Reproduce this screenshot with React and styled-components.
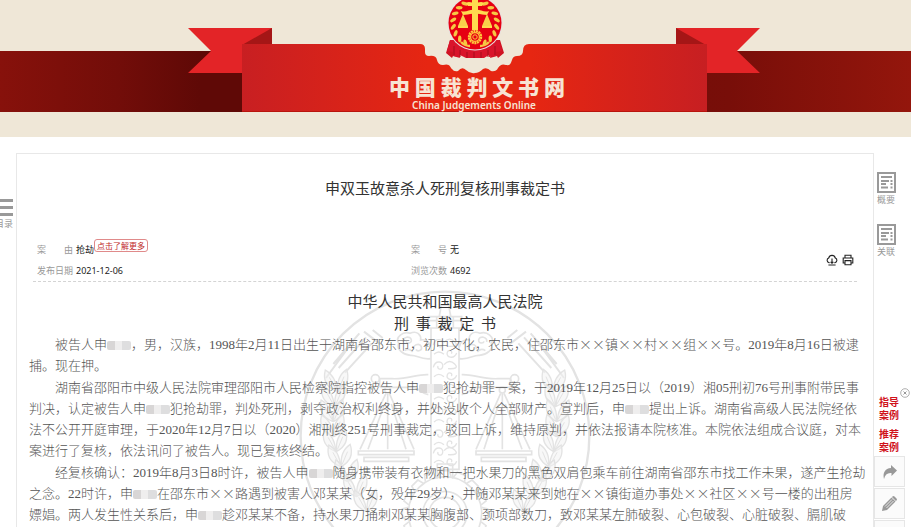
import styled, { createGlobalStyle } from 'styled-components';

const GlobalStyle = createGlobalStyle`
    * { box-sizing: border-box; }
    body {
        margin: 0;
        background: #fff;
        color: #333;
        font-family: "Noto Sans", "Noto Sans CJK SC", sans-serif;
    }
    button {
        padding: 0;
        border: 0;
        background: none;
        font: inherit;
        color: inherit;
        cursor: pointer;
    }
    svg { display: block; }
`

const Page = styled.div`
    height: 100vh;
    overflow: hidden;
`

/* ---------- header ---------- */

const Header = styled.header`
    display: flex;
    justify-content: center;
    height: 137px;
    padding-left: 37px;
    background:
        linear-gradient(90deg, #87110b 0, #720d09 120px, #5f0906 200px, #5f0906 260px, #780e09 80%, #94160c 100%) 0 51px / 100% 61px no-repeat,
        #efe7d7;
`
const Banner = styled.div`
    position: relative;
    width: 572px;
    flex: none;
`
const BannerText = styled.div`
    position: absolute;
    left: 0;
    right: 0;
    top: 73px;
    text-align: center;
    color: #f7e3d3;
    white-space: nowrap;
`
const SiteName = styled.h1`
    margin: 0;
    padding-left: 6px;
    font: 900 21px/26px "Noto Sans CJK SC", sans-serif;
`
const SiteNameEn = styled.p`
    margin: 0;
    font: 600 10px/12px "Noto Sans", sans-serif;
`

const WHEAT = [20, 38, 56, 74, 92, 110, 128, 146]

function Emblem() {
    return (
        <g>
            <path d="M262 40h11l4 14-6 1 1 3-7-2-1 2-6-5zM312 40h-11l-4 14 6 1-1 3 7-2 1 2 6-5z" fill="#cf1322" />
            <path d="M262 40l-3 11 6 1v4l7 1v-2l6 3h18l5-3v2l7-1v-4l6-1-3-11z" fill="#d9142b" />
            <path d="M266 46v9M272 50v7M279 52v6M286 52v6M293 52v6M300 50v7M307 46v9" stroke="#a50d1c" strokeWidth="1" />
            <circle cx="287" cy="23" r="27.5" fill="#e8e0e0" />
            <circle cx="287" cy="23" r="26.5" fill="#e60012" />
            {WHEAT.map(a => {
                const t = (a + 8) * Math.PI / 180
                const x = 22 * Math.sin(t)
                const y = 23 - 22 * Math.cos(t)
                return (
                    <g key={a} fill="#f6c744">
                        <ellipse cx={287 - x} cy={y} rx="3.4" ry="1.7" transform={`rotate(${40 - a} ${287 - x} ${y})`} />
                        <ellipse cx={287 + x} cy={y} rx="3.4" ry="1.7" transform={`rotate(${a - 40} ${287 + x} ${y})`} />
                    </g>
                )
            })}
            <path d="M284 0h6v30h-6z" fill="#ffd94f" />
            <path d="M278 3c3-2 6 0 9 0s6-2 9 0l-2 3h-14zM273 11c5 2 9-2 14-1 5-1 9 3 14 1l-2 4c-4 0-8-2-12-1-4-1-8 1-12 1z" fill="#ffd94f" />
            <path d="M275 14l-5 12h10zM299 14l-5 12h10z" fill="#f9cf4a" />
            <path d="M270 26h10v2h-10zM294 26h10v2h-10z" fill="#ffd94f" />
            <circle cx="287" cy="37" r="6" fill="#e60012" stroke="#ffc83c" strokeWidth="2.4" strokeDasharray="2 .6" />
            <circle cx="287" cy="37" r="4.4" fill="none" stroke="#ffc83c" strokeWidth="1.2" />
            <circle cx="287" cy="37" r="2.2" fill="none" stroke="#ffc83c" strokeWidth="1" />
            <path d="M273 42c3 3 6 4 9 4M301 42c-3 3-6 4-9 4" fill="none" stroke="#f6c744" strokeWidth="2.4" />
        </g>
    )
}

function Ribbon() {
    return (
        <svg width="572" height="112" viewBox="0 0 572 112" aria-hidden="true">
            <defs>
                <linearGradient id="ribbon" x1="0" x2="1" y1="0" y2="0">
                    <stop offset="0" stopColor="#c81f22" />
                    <stop offset=".4" stopColor="#e62612" />
                    <stop offset=".62" stopColor="#e62612" />
                    <stop offset="1" stopColor="#c71f22" />
                </linearGradient>
            </defs>
            <path d="M0 28h84v16L54 73H0l23-22z" fill="#e32427" />
            <path d="M572 28h-84v16l30 29h54l-23-22z" fill="#e32427" />
            <path d="M84 28v17H54zM488 28v17h30z" fill="#a51616" />
            <path d="M225 40h120v38H225z" fill="#efe7d7" />
            <path
                d="M54 44H232Q237 44 237 49V52Q237 56 241 56Q248 55 249 60Q250 65 255 65C262 63 262 67 264 69Q266 72 270 71Q274 66 278 70Q282 74 287 73Q291 73 295 69Q299 67 303 71Q308 72 310 68Q313 63 318 65C323 66 323 62 324 60Q325 56 329 56Q335 56 335 51Q335 44 341 44H519V112H54z"
                fill="url(#ribbon)"
            />
            <path d="M54 111h465v1H54z" fill="#b9150d" />
            <Emblem />
        </svg>
    )
}

/* ---------- layout ---------- */

const Columns = styled.div`
    display: flex;
    align-items: flex-start;
    padding-top: 16px;
`
const LeftRail = styled.nav`
    display: flex;
    flex: none;
    justify-content: flex-end;
    width: 16px;
    padding: 44px 3px 0 0;
    overflow: hidden;
`
const RightRail = styled.aside`
    flex: none;
    width: 37px;
    padding-top: 18px;
`
const RailButton = styled.button`
    display: flex;
    flex: none;
    flex-direction: column;
    align-items: center;
    width: 18px;
    margin: ${props => props.$margin || 0};
    color: #999;
    font-size: 9px;
    line-height: 13px;
    white-space: nowrap;
`
const Card = styled.main`
    flex: 1;
    min-width: 0;
    padding: 0 16px 40px;
    border: 1px solid #e8e8e8;
`
const Title = styled.h2`
    margin: 0;
    padding: 22px 0 39px;
    font: 400 15px/24px "Noto Sans CJK SC", sans-serif;
    text-align: center;
`

/* ---------- case info ---------- */

const InfoBar = styled.section`
    display: flex;
    align-items: center;
    justify-content: space-between;
    padding: 0 3px 0 4px;
    border-bottom: 1px dashed #d4d4d4;
`
const InfoGrid = styled.dl`
    display: grid;
    flex: 1;
    grid-template-columns: 374px 1fr;
    margin: 0;
    font-size: 9px;
    line-height: 21px;
`
const InfoItem = styled.div`
    display: flex;
    gap: 3px;
    dt { color: #999; white-space: pre; }
    dd { display: flex; margin: 0; color: #222; }
`
const MoreButton = styled.button`
    height: 13px;
    padding: 0 2px;
    border: 1px solid #e08a8a;
    border-radius: 3px;
    color: #c02a2a;
    font-size: 8px;
    line-height: 11px;
`
const Tools = styled.div`
    display: flex;
    gap: 4px;
`

function CloudIcon() {
    return (
        <svg width="12" height="12" viewBox="0 0 12 12" fill="none" stroke="#222" strokeWidth="1.1">
            <path d="M3.6 8.6H3A2.4 2.4 0 0 1 2.7 4 3.4 3.4 0 0 1 9.3 4 2.4 2.4 0 0 1 9 8.6h-.6M6 4.6V9M4.6 7.8L6 9.2l1.4-1.4M2.4 11h7.2" />
        </svg>
    )
}

function PrintIcon() {
    return (
        <svg width="12" height="12" viewBox="0 0 12 12" fill="none" stroke="#222" strokeWidth="1.1">
            <path d="M3 4V1.2h6V4M3 9H1.2V4h9.6v5H9M3 6.6h6v4.2H3z" />
        </svg>
    )
}

/* ---------- judgement text ---------- */

const Article = styled.article`
    position: relative;
    padding-top: 8px;
    color: #555;
`
const Watermark = styled.svg`
    position: absolute;
    top: -2px;
    left: 50%;
    z-index: -1;
    margin-left: -155px;
`
const CourtName = styled.h3`
    margin: 0;
    color: #333;
    font: 400 15px/22px "Noto Sans CJK SC", sans-serif;
    text-align: center;
    white-space: pre;
`
const Paragraph = styled.p`
    margin: 0 -12px 1px -4px;
    font-family: "Liberation Serif", "Noto Sans CJK SC", serif;
    font-size: 13px;
    font-weight: 300;
    line-height: 21px;
    text-indent: 2em;
    white-space: nowrap;
`
const Cross = styled.span`
    font-family: "Noto Sans CJK SC", sans-serif;
    line-height: 1;
`
const Blot = styled.span`
    display: inline-block;
    width: 24px;
    height: 9px;
    border-radius: 2px;
    background: linear-gradient(90deg, #d8d6d6 0 8px, #efeeee 8px 15px, #dededf 15px);
    vertical-align: -1px;
`

// "#" marks a blotted name
const PARAGRAPHS = [
    [
        '被告人申#，男，汉族，1998年2月11日出生于湖南省邵东市，初中文化，农民，住邵东市××镇××村××组××号。2019年8月16日被逮',
        '捕。现在押。',
    ],
    [
        '湖南省邵阳市中级人民法院审理邵阳市人民检察院指控被告人申#犯抢劫罪一案，于2019年12月25日以（2019）湘05刑初76号刑事附带民事',
        '判决，认定被告人申#犯抢劫罪，判处死刑，剥夺政治权利终身，并处没收个人全部财产。宣判后，申#提出上诉。湖南省高级人民法院经依',
        '法不公开开庭审理，于2020年12月7日以（2020）湘刑终251号刑事裁定，驳回上诉，维持原判，并依法报请本院核准。本院依法组成合议庭，对本',
        '案进行了复核，依法讯问了被告人。现已复核终结。',
    ],
    [
        '经复核确认：2019年8月3日8时许，被告人申#随身携带装有衣物和一把水果刀的黑色双肩包乘车前往湖南省邵东市找工作未果，遂产生抢劫',
        '之念。22时许，申#在邵东市××路遇到被害人邓某某（女，殁年29岁），并随邓某某来到她在××镇街道办事处××社区××号一楼的出租房',
        '嫖娼。两人发生性关系后，申#趁邓某某不备，持水果刀捅刺邓某某胸腹部、颈项部数刀，致邓某某左肺破裂、心包破裂、心脏破裂、膈肌破',
    ],
]

function Line({ text }) {
    return text.split(/(×+|#)/).map((part, i) => {
        if (part === '#') return <Blot key={i} />
        if (part[0] === '×') return <Cross key={i}>{part}</Cross>
        return part
    })
}

const TEETH = Array.from({ length: 16 }, (_, i) => i * 22.5)
const LEAVES = Array.from({ length: 9 }, (_, i) => i)
const CURLS = [195, 262, 330, 398, 466, 520]

function HalfEmblem() {
    return (
        <g>
            {/* rays */}
            <path d="M222 155l50 38M248 150l30 24M208 160l-78 92M228 172l-82 92M190 182l-82 112M245 190l-80 88" strokeWidth="6" />
            {/* cloud wing */}
            <path d="M422 236c-30 4-42-12-60-10-22-2-44-18-36-36-12-18 14-38 34-30 22-10 34 6 32 20 16-4 30 8 30 22" />
            <path d="M340 186c-4-16 22-20 24-6 2 10-14 12-16 4M372 208c-6-12 16-22 22-8 4 12-12 16-16 8M344 212c10-8 20-2 24 4" />
            {/* beam */}
            <path d="M415 284c-34-2-60 14-108 12h-38M415 344c-20-2-24-18-44-22h-100M269 296v26" />
            <circle cx="256" cy="296" r="12" />
            {/* scale */}
            <circle cx="293" cy="330" r="9" />
            <path d="M288 340l-78 168M284 372l-50 136M293 340v168M298 340l74 168M304 372l44 136" />
            <path d="M205 513h167v11H205zM222 532h134v12H222z" />
            {/* wheat */}
            {LEAVES.map(i => {
                const y = 290 + i * 45
                const x = 140 - 26 * Math.sin(i / 2.6) + i * i * 1.4
                return (
                    <g key={i} strokeWidth="4">
                        <path d={`M${x} ${y + 44}q-46-18-34-64 34 20 34 64zM${x + 4} ${y + 44}q40-22 26-66-32 22-26 66z`} fill="#f2f2f2" fillOpacity=".5" />
                        <path d={`M${x - 22} ${y + 2}l20 36M${x + 22} ${y}l-16 38`} strokeWidth="3" />
                    </g>
                )
            })}
        </g>
    )
}

function CourtWatermark() {
    return (
        <Watermark width="310" height="247" viewBox="0 0 930 741" fill="none" stroke="#e3e3e3" strokeWidth="5" aria-hidden="true">
            <circle cx="465" cy="468" r="433" strokeWidth="7" />
            <HalfEmblem />
            <g transform="matrix(-1 0 0 1 930 0)"><HalfEmblem /></g>
            <path d="M448 108l6-32h22l6 32M415 110h100v34H415zM423 144h84v424h-84zM415 122h100M440 110v34M465 110v34M490 110v34" />
            {CURLS.map(y => (
                <path key={y} d={`M430 ${y}c6-24 32-18 28-2-2 12-18 8-14-2M500 ${y + 24}c-8 20-34 14-28-2 4-10 18-4 12 4M462 ${y - 8}q16-18 32-2t-20 14M432 ${y + 28}q14-14 30 0`} strokeWidth="4" />
            ))}
            <path d="M442 596v-44h46v44" />
            {TEETH.map(a => (
                <path key={a} d="M447 590l5-18h26l5 18" transform={`rotate(${a} 465 700)`} />
            ))}
            <circle cx="465" cy="700" r="110" />
            <circle cx="465" cy="700" r="66" />
            <circle cx="465" cy="700" r="48" />
        </Watermark>
    )
}

/* ---------- side tools ---------- */

function MenuIcon() {
    return (
        <svg width="18" height="20" viewBox="0 0 18 20" fill="#999">
            <path d="M0 2h18v3H0zM0 9h18v3H0zM0 16h18v3H0z" />
        </svg>
    )
}

function DocIcon() {
    return (
        <svg width="19" height="22" viewBox="0 0 19 22" fill="none" stroke="#999">
            <path d="M1 2h17v19H1z" strokeWidth="2" />
            <path d="M4 6h11M4 10h8M4 13h5M4 16.500h7M13.500 10h2M13.500 13h2M13.500 16.500h2" strokeWidth="2" />
        </svg>
    )
}

const CaseLinks = styled.div`
    position: relative;
    display: flex;
    flex-direction: column;
    gap: 6px;
    margin-top: 137px;
    padding: 0 0 3px 5px;
`
const CaseLink = styled.a`
    width: 22px;
    color: #d0121b;
    font: 700 10px/13px "Noto Sans CJK SC", sans-serif;
    text-decoration: none;
`
const Close = styled.button`
    position: absolute;
    top: -7px;
    right: 1px;
`
const ToolBox = styled.button`
    display: flex;
    align-items: center;
    justify-content: center;
    width: 31px;
    height: 31px;
    margin-bottom: 1px;
    border: 1px solid #e6e6e6;
    background: #fbfbfb;
    color: #999;
    font-size: 8px;
    white-space: nowrap;
`

function App() {
    return (
        <Page>
            <GlobalStyle />
            <Header>
                <Banner>
                    <Ribbon />
                    <BannerText>
                        <SiteName>中 国 裁 判 文 书 网</SiteName>
                        <SiteNameEn>China Judgements Online</SiteNameEn>
                    </BannerText>
                </Banner>
            </Header>
            <Columns>
                <LeftRail>
                    <RailButton><MenuIcon />目录</RailButton>
                </LeftRail>
                <Card>
                    <Title>申双玉故意杀人死刑复核刑事裁定书</Title>
                    <InfoBar>
                        <InfoGrid>
                            <InfoItem>
                                <dt>案　　由</dt>
                                <dd>抢劫<MoreButton>点击了解更多</MoreButton></dd>
                            </InfoItem>
                            <InfoItem><dt>案　　号</dt><dd>无</dd></InfoItem>
                            <InfoItem><dt>发布日期</dt><dd>2021-12-06</dd></InfoItem>
                            <InfoItem><dt>浏览次数</dt><dd>4692</dd></InfoItem>
                        </InfoGrid>
                        <Tools>
                            <button aria-label="下载"><CloudIcon /></button>
                            <button aria-label="打印"><PrintIcon /></button>
                        </Tools>
                    </InfoBar>
                    <Article>
                        <CourtWatermark />
                        <CourtName>中华人民共和国最高人民法院</CourtName>
                        <CourtName>刑  事  裁  定  书</CourtName>
                        {PARAGRAPHS.map((lines, i) => (
                            <Paragraph key={i}>
                                {lines.map((text, j) => (
                                    <span key={j}>{j > 0 && <br />}<Line text={text} /></span>
                                ))}
                            </Paragraph>
                        ))}
                    </Article>
                </Card>
                <RightRail>
                    <RailButton $margin="0 0 17px 3px"><DocIcon />概要</RailButton>
                    <RailButton $margin="0 0 0 3px"><DocIcon />关联</RailButton>
                    <CaseLinks>
                        <Close aria-label="关闭">
                            <svg width="10" height="10" viewBox="0 0 10 10" fill="none" stroke="#999">
                                <circle cx="5" cy="5" r="4.3" strokeWidth=".8" />
                                <path d="M3.5 3.5l3 3M6.5 3.5l-3 3" strokeWidth="1" />
                            </svg>
                        </Close>
                        <CaseLink href="#guide">指导案例</CaseLink>
                        <CaseLink href="#recommend">推荐案例</CaseLink>
                    </CaseLinks>
                    <ToolBox aria-label="分享">
                        <svg width="16" height="16" viewBox="0 0 16 16" fill="#999">
                            <path d="M9 1l6 5.5L9.5 12V9C5.500 8.500 3 10.500 2 15 .5 9 3 4.500 9 4z" />
                        </svg>
                    </ToolBox>
                    <ToolBox aria-label="纠错">
                        <svg width="17" height="17" viewBox="0 0 17 17" fill="#999">
                            <path d="M1 16l1-5L10.500 2.500l4 4L6 15z" />
                            <path d="M11.500 1.500q1-1 2 0l2 2q1 1 0 2l-.6.6-4-4z" />
                            <path d="M4 11.500l7-7M5.500 13l7-7" stroke="#fbfbfb" strokeWidth=".8" />
                        </svg>
                    </ToolBox>
                    <ToolBox>返回顶部</ToolBox>
                </RightRail>
            </Columns>
        </Page>
    )
}

export default App
